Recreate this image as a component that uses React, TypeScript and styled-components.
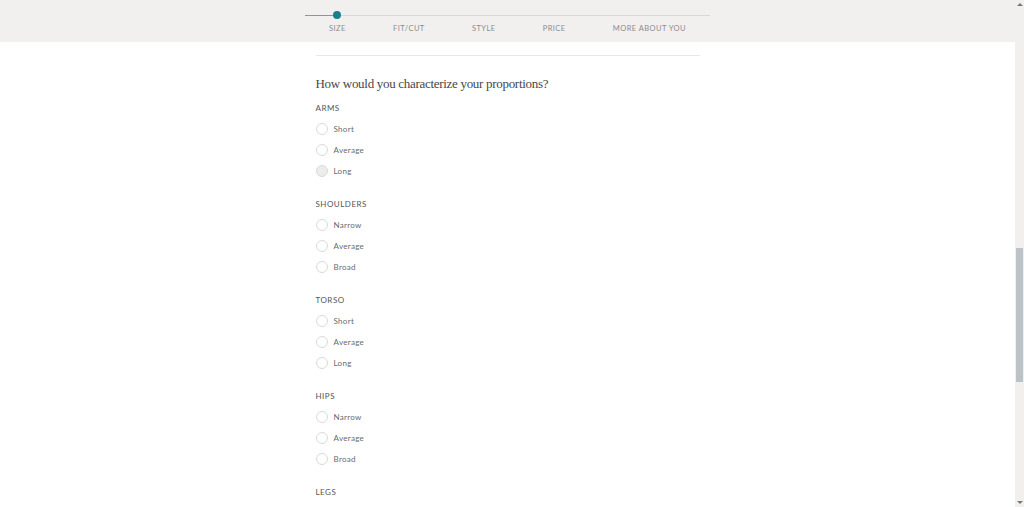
import React from 'react';
import styled, { createGlobalStyle } from 'styled-components';

const GlobalStyle = createGlobalStyle`
  html, body {
    margin: 0;
    padding: 0;
    background: #fff;
    font-family: Lato, 'Liberation Sans', sans-serif;
  }
`;

const Page = styled('div')`
  display: flex;
  height: 100vh;
  overflow: hidden;
`;

const Main = styled('div')`
  flex: 1;
  display: flex;
  flex-direction: column;
  min-width: 0;
`;

const Header = styled('div')`
  height: 42px;
  background: #f1f0ee;
  flex-shrink: 0;
`;

const Stepper = styled('div')`
  width: 405px;
  margin: 0 auto;
  padding-top: 15px;
`;

const Track = styled('div')`
  position: relative;
  height: 1px;
  background: #d5d8d8;
`;

const Progress = styled('div')`
  position: absolute;
  left: 0;
  top: 0;
  height: 1px;
  width: 32px;
  background: #8f9596;
`;

const Dot = styled('div')`
  position: absolute;
  left: 28px;
  top: -4px;
  width: 8px;
  height: 8px;
  border-radius: 50%;
  background: #17808c;
`;

const Steps = styled('div')`
  display: flex;
  justify-content: space-between;
  padding: 0 24px;
  margin-top: 7px;
`;

const Step = styled('span')`
  font-size: 7.5px;
  line-height: 12px;
  letter-spacing: 0.45px;
  color: #8c8c8c;
`;

const Content = styled('div')`
  width: 384px;
  margin: 13px auto 0;
  border-top: 1px solid #e8e8e8;
  padding-top: 18px;
`;

const Question = styled('h2')`
  margin: 0 0 8px;
  font-family: 'Liberation Serif', serif;
  font-weight: normal;
  font-size: 13px;
  line-height: 20px;
  letter-spacing: -0.3px;
  color: #474747;
`;

const Section = styled('div')`
  margin-bottom: 17px;
`;

const SectionLabel = styled('div')`
  font-size: 8px;
  line-height: 13px;
  letter-spacing: 0.5px;
  color: #555;
  margin-bottom: 3px;
`;

const Option = styled('label')`
  display: flex;
  align-items: center;
  height: 21px;
  gap: 6px;
  cursor: pointer;
`;

const Radio = styled('span')<{ $hover?: boolean }>`
  width: 10px;
  height: 10px;
  border-radius: 50%;
  border: 1px solid #dadada;
  background: ${(p) => (p.$hover ? '#ececec' : '#fff')};
`;

const OptionText = styled('span')`
  font-size: 8px;
  letter-spacing: 0.3px;
  color: #6a6a6a;
`;

const Scrollbar = styled('div')`
  width: 9px;
  background: #f1f0ee;
  display: flex;
  flex-direction: column;
  align-items: center;
`;

const Arrow = styled('div')<{ $down?: boolean }>`
  width: 0;
  height: 0;
  margin: 3px 0;
  border-left: 3px solid transparent;
  border-right: 3px solid transparent;
  ${(p) => (p.$down ? 'border-top: 3px solid #777;' : 'border-bottom: 3px solid #777;')}
`;

const ThumbTrack = styled('div')`
  flex: 1;
  width: 100%;
`;

const Thumb = styled('div')`
  margin: 239px auto 0;
  width: 7px;
  height: 134px;
  background: #bcc3c6;
`;

const steps = ['SIZE', 'FIT/CUT', 'STYLE', 'PRICE', 'MORE ABOUT YOU'];

const sections = [
  { title: 'ARMS', options: ['Short', 'Average', 'Long'] },
  { title: 'SHOULDERS', options: ['Narrow', 'Average', 'Broad'] },
  { title: 'TORSO', options: ['Short', 'Average', 'Long'] },
  { title: 'HIPS', options: ['Narrow', 'Average', 'Broad'] },
  { title: 'LEGS', options: ['Short', 'Average', 'Long'] },
];

export default function App() {
  return (
    <>
      <GlobalStyle />
      <Page>
        <Main>
          <Header>
            <Stepper>
              <Track>
                <Progress />
                <Dot />
              </Track>
              <Steps>
                {steps.map((s) => (
                  <Step key={s}>{s}</Step>
                ))}
              </Steps>
            </Stepper>
          </Header>
          <Content>
            <Question>How would you characterize your proportions?</Question>
            {sections.map((section, i) => (
              <Section key={section.title}>
                <SectionLabel>{section.title}</SectionLabel>
                {section.options.map((o, j) => (
                  <Option key={o}>
                    <Radio $hover={i === 0 && j === 2} />
                    <OptionText>{o}</OptionText>
                  </Option>
                ))}
              </Section>
            ))}
          </Content>
        </Main>
        <Scrollbar>
          <Arrow />
          <ThumbTrack>
            <Thumb />
          </ThumbTrack>
          <Arrow $down />
        </Scrollbar>
      </Page>
    </>
  );
}
